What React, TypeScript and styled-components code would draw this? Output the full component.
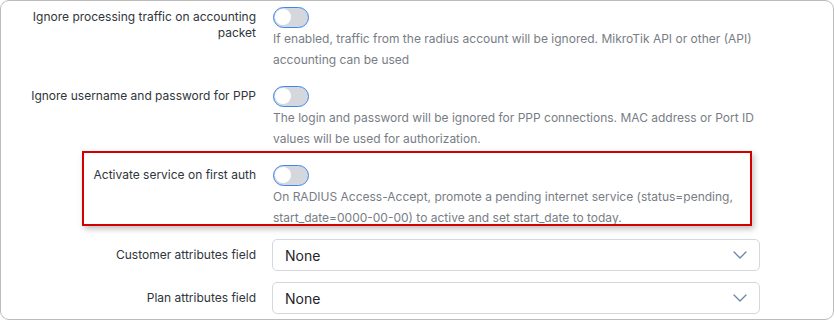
import React from "react";
import styled, { createGlobalStyle } from "styled-components";

const Global = createGlobalStyle`
  html, body { margin: 0; padding: 0; background: #ffffff; }
  body { font-family: Inter, "Noto Sans", "Liberation Sans", sans-serif; }
  * { box-sizing: border-box; }
`;

const Card = styled.div`
  width: 834px;
  height: 320px;
  border: 1px solid #bcbcbc;
  border-radius: 9px;
  background: #fff;
  overflow: hidden;
  padding-top: 6px;
`;

const Row = styled.div<{ $gap: number; $center?: boolean }>`
  position: relative;
  display: grid;
  grid-template-columns: 255px 488px;
  column-gap: 16px;
  align-items: ${(p) => (p.$center ? "center" : "start")};
  margin-bottom: ${(p) => p.$gap}px;
`;

const Label = styled.div`
  padding-left: 16px;
  text-align: right;
  font-size: 12px;
  line-height: 16px;
  color: #30353b;
  padding-top: 2px;
`;

const CenterLabel = styled(Label)`
  padding-top: 0;
`;

const Control = styled.div`
  display: flex;
  flex-direction: column;
  align-items: flex-start;
`;

const Toggle = styled.div`
  position: relative;
  width: 36px;
  height: 21px;
  border-radius: 11px;
  border: 1.5px solid #3d86f2;
  background: #d4d7dc;
  margin-left: 1px;
  &::after {
    content: "";
    position: absolute;
    left: 1px;
    top: 1px;
    width: 16px;
    height: 16px;
    border-radius: 50%;
    background: #fff;
  }
`;

const Desc = styled.div`
  font-size: 12px;
  line-height: 21px;
  color: #787d85;
  margin-left: 1px;
`;

const Highlight = styled.div`
  position: absolute;
  left: 81px;
  top: -14px;
  width: 670px;
  bottom: 2px;
  border: 2px solid #d40000;
  box-shadow: 2px 3px 6px rgba(0, 0, 0, 0.25);
  pointer-events: none;
`;

const Select = styled.div`
  width: 488px;
  height: 32px;
  border: 1px solid #d3d7de;
  border-radius: 5px;
  display: flex;
  align-items: center;
  justify-content: space-between;
  padding: 0 12px 0 12px;
  font-size: 14px;
  color: #1f2328;
`;

const Chevron = () => (
  <svg width="14" height="8" viewBox="0 0 14 8" fill="none">
    <path d="M1 1L7 7L13 1" stroke="#6f88a8" strokeWidth="1.4" strokeLinecap="round" strokeLinejoin="round" />
  </svg>
);

type ToggleRowProps = {
  label: string;
  desc: string;
  gap: number;
  highlighted?: boolean;
};

const ToggleRow = ({ label, desc, gap, highlighted }: ToggleRowProps) => (
  <Row $gap={gap}>
    {highlighted && <Highlight />}
    <Label>{label}</Label>
    <Control>
      <Toggle />
      <Desc>{desc}</Desc>
    </Control>
  </Row>
);

const SelectRow = ({ label, gap }: { label: string; gap: number }) => (
  <Row $gap={gap} $center>
    <CenterLabel>{label}</CenterLabel>
    <Select>
      <span>None</span>
      <Chevron />
    </Select>
  </Row>
);

export default function App() {
  return (
    <>
      <Global />
      <Card>
        <ToggleRow
          label="Ignore processing traffic on accounting packet"
          desc="If enabled, traffic from the radius account will be ignored. MikroTik API or other (API) accounting can be used"
          gap={16}
        />
        <ToggleRow
          label="Ignore username and password for PPP"
          desc="The login and password will be ignored for PPP connections. MAC address or Port ID values will be used for authorization."
          gap={16}
        />
        <ToggleRow
          label="Activate service on first auth"
          desc="On RADIUS Access-Accept, promote a pending internet service (status=pending, start_date=0000-00-00) to active and set start_date to today."
          gap={11}
          highlighted
        />
        <SelectRow label="Customer attributes field" gap={11} />
        <SelectRow label="Plan attributes field" gap={0} />
      </Card>
    </>
  );
}
